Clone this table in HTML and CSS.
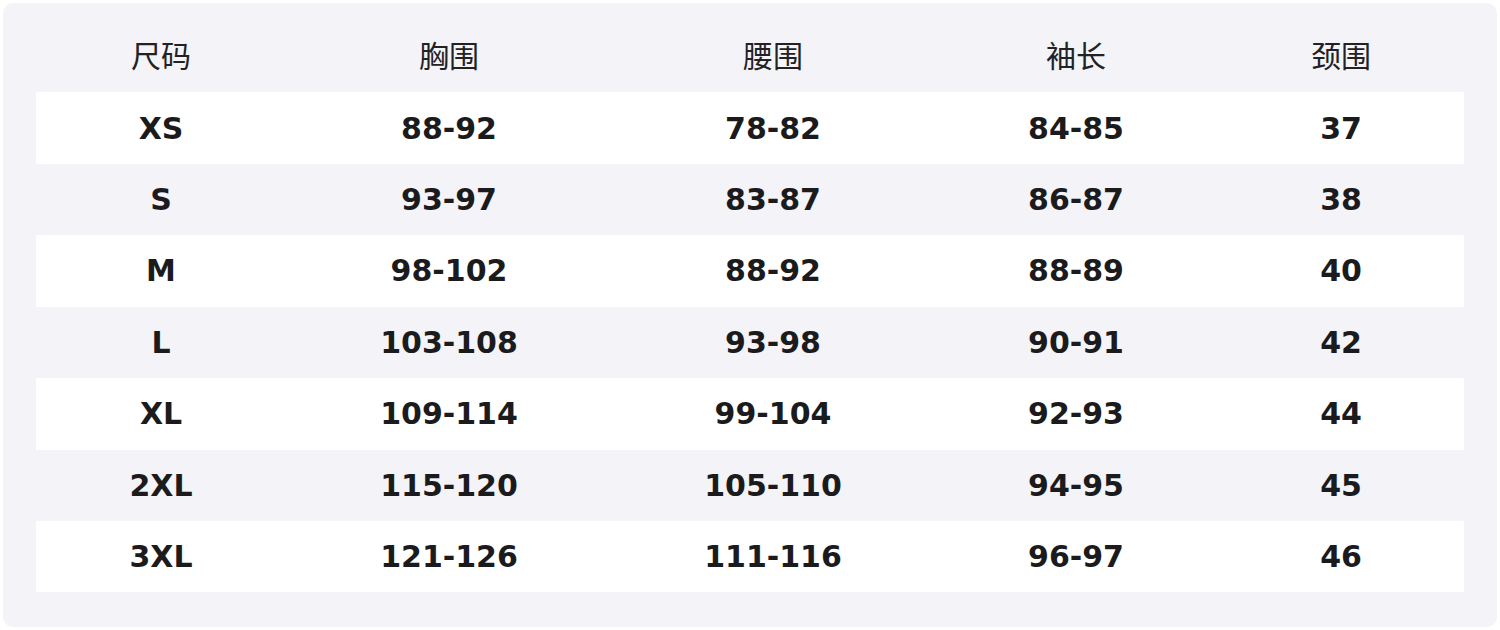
FILE: index.html
```html
<!DOCTYPE html>
<html lang="zh">
<head>
<meta charset="utf-8">
<title>尺码表</title>
<link rel="stylesheet" href="styles.css">
</head>
<body>
<div class="card">
  <table class="size-table">
    <colgroup>
      <col class="c1"><col class="c2"><col class="c3"><col class="c4"><col class="c5">
    </colgroup>
    <thead>
      <tr><th>尺码</th><th>胸围</th><th>腰围</th><th>袖长</th><th>颈围</th></tr>
    </thead>
    <tbody>
      <tr><td>XS</td><td>88-92</td><td>78-82</td><td>84-85</td><td>37</td></tr>
      <tr><td>S</td><td>93-97</td><td>83-87</td><td>86-87</td><td>38</td></tr>
      <tr><td>M</td><td>98-102</td><td>88-92</td><td>88-89</td><td>40</td></tr>
      <tr><td>L</td><td>103-108</td><td>93-98</td><td>90-91</td><td>42</td></tr>
      <tr><td>XL</td><td>109-114</td><td>99-104</td><td>92-93</td><td>44</td></tr>
      <tr><td>2XL</td><td>115-120</td><td>105-110</td><td>94-95</td><td>45</td></tr>
      <tr><td>3XL</td><td>121-126</td><td>111-116</td><td>96-97</td><td>46</td></tr>
    </tbody>
  </table>
</div>
</body>
</html>
```

FILE: styles.css
```css
html, body {
  margin: 0;
  padding: 0;
  background: #ffffff;
}
body {
  padding: 3px;
  width: 1500px;
  height: 630px;
  box-sizing: border-box;
}
.card {
  width: 1494px;
  height: 624px;
  box-sizing: border-box;
  background: #f3f3f8;
  border-radius: 10px;
  padding: 18px 33px 35px;
}
.size-table {
  width: 1428px;
  border-collapse: collapse;
  table-layout: fixed;
  color: #1b1b1d;
}
.c1 { width: 250px; }
.c2 { width: 326px; }
.c3 { width: 322px; }
.c4 { width: 284px; }
.c5 { width: 246px; }
.size-table th,
.size-table td {
  padding: 0;
  text-align: center;
  vertical-align: middle;
  height: 71.43px;
}
.size-table th {
  font-family: "Noto Sans CJK SC", "Noto Sans", sans-serif;
  font-weight: 400;
  font-size: 30px;
  color: #222224;
  padding-bottom: 5px;
  box-sizing: border-box;
}
.size-table td {
  font-family: "DejaVu Sans", "Noto Sans CJK SC", sans-serif;
  font-weight: 700;
  font-size: 30px;
}
.size-table tbody tr:nth-child(odd) {
  background: #ffffff;
}
.size-table tbody tr:nth-child(even) {
  background: #f3f3f8;
}
```
